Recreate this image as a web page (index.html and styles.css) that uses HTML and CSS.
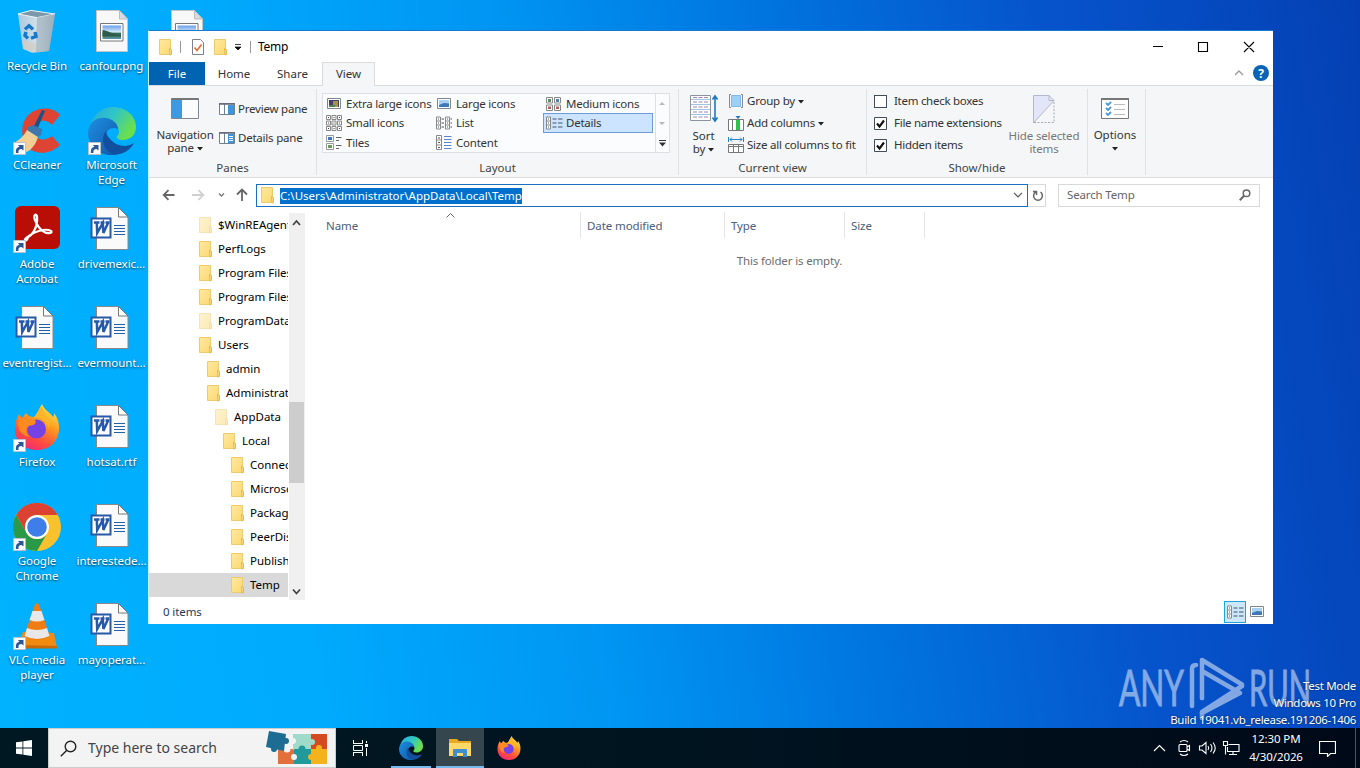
FILE: index.html
```html
<!DOCTYPE html>
<html lang="en">
<head>
<meta charset="utf-8">
<title>Desktop</title>
<link rel="stylesheet" href="styles.css">
</head>
<body>
<svg class="defs" width="0" height="0">
  <defs>
    <linearGradient id="gFold" x1="0" y1="0" x2="1" y2="1"><stop offset="0" stop-color="#ffe9a0"/><stop offset="1" stop-color="#fcd970"/></linearGradient>
    <linearGradient id="gEdge" x1="0" y1="0" x2="1" y2=".5"><stop offset="0" stop-color="#27a9dd"/><stop offset=".5" stop-color="#2fc5c8"/><stop offset="1" stop-color="#6be04a"/></linearGradient>
    <linearGradient id="gEdge2" x1="0" y1="0" x2="1" y2="1"><stop offset="0" stop-color="#1f8fe0"/><stop offset="1" stop-color="#0f55a8"/></linearGradient>
    <linearGradient id="gFox" x1=".8" y1="0" x2=".3" y2="1"><stop offset="0" stop-color="#fff04a"/><stop offset=".4" stop-color="#ff9a20"/><stop offset=".75" stop-color="#ff4a40"/><stop offset="1" stop-color="#f02a78"/></linearGradient>
    <linearGradient id="gSky" x1="0" y1="0" x2="0" y2="1"><stop offset="0" stop-color="#6aa0e8"/><stop offset=".5" stop-color="#d8ecfa"/><stop offset=".55" stop-color="#386a58"/><stop offset="1" stop-color="#5a94a8"/></linearGradient>
    <linearGradient id="gBin" x1="0" y1="0" x2="1" y2="0"><stop offset="0" stop-color="#a9c9de"/><stop offset=".6" stop-color="#d9e4ea"/><stop offset="1" stop-color="#8fa4b2"/></linearGradient>
    <symbol id="folder" viewBox="0 0 16 18"><path d="M1.500 1.500h11v15h-11z" fill="url(#gFold)" stroke="#eccb70"/><path d="M11.500 10.500l2 1v5l-1.500.500z" fill="#ffe08a" stroke="#d8b040" stroke-width=".8"/></symbol>
    <symbol id="shortcut" viewBox="0 0 13 13"><path d="M.5.5h12v12H.5z" fill="#fafcff" stroke="#b8c4cc"/><path d="M3 11C2.500 7 4 5 6.500 5L5 3h5.500v5.500L8.500 7C6 7 5 8.500 5.500 11z" fill="#2b5797"/></symbol>
    <symbol id="word" viewBox="0 0 40 46"><path d="M6.500 1.500h22l9.500 10v32H6.500z" fill="#fafafa" stroke="#888"/><path d="M28.500 1.500V11h9.500z" fill="#fff" stroke="#777"/><path d="M24 19.500h11M24 22.500h11M24 25.500h11M24 28.500h11" stroke="#2460a8"/><path d="M1.500 12.500h19v19h-19z" fill="#fff" stroke="#2659a8" stroke-width="2"/><path d="M4 16.500h5.500M10.500 16.500h4M15.500 16.500h4M6.800 17l.4 10 5.600-10 .6 10L18 17" fill="none" stroke="#2659a8" stroke-width="2.500"/></symbol>
    <symbol id="photo" viewBox="0 0 34 44"><path d="M1.500 1.500h23l8 8.500v32.500h-31z" fill="#f8f8f8" stroke="#c4c4c4"/><path d="M24.500 1.500V10h8z" fill="#d8dce0" stroke="#bbb"/><path d="M5.500 14.500h22.500v17.500H5.500z" fill="#fff" stroke="#777"/><path d="M7.500 16.500h18.500v13.500H7.500z" fill="url(#gSky)"/><path d="M7.500 21c5 0 7 4 18.500 4.500v2H7.500z" fill="#2e5b4b"/></symbol>
    <symbol id="edge" viewBox="0 0 48 48"><path d="M2 20C5 7 14 0 25 0c13 0 23 9 23 20 0 8-6 13-13 13-5 0-7-2-6-4 3-2 2-6 1-8C26 13 12 10 2 20z" fill="url(#gEdge)"/><path d="M0 26C1 13 11 10 18 11c7 1 12 6 12 11-6-3-13 1-12 9 1 8 6 13 13 16C15 52 0 41 0 26z" fill="url(#gEdge2)"/><path d="M18 24c-8 10 1 28 17 22 5-2 9-6 11-10-8 5-17 3-22-2-4-4-6-7-6-10z" fill="#124f9c"/></symbol>
    <symbol id="firefox" viewBox="0 0 46 46"><path d="M23 46C9 46 0 36 1 23c0-6 3-10 4-13l3 4 4-5c2 3 5 4 8 4 3-3 5-8 8-13 2 6 8 8 11 13 1-1 1-2 1-4 4 5 5 10 5 15 0 13-9 22-22 22z" fill="url(#gFox)"/><circle cx="22.500" cy="25" r="9.500" fill="#7542e5"/><path d="M5 14c7-1 12 3 16 2 2 4-1 5-6 6-4 2-3 8 1 11-9-1-14-9-11-19z" fill="#ff8b20"/><path d="M20 14c6-1 13 2 14 10 3-4 2-9-1-12-2-3-4-5-5-10-3 3-5 8-8 12z" fill="#ffb52a"/></symbol>
    <symbol id="picS" viewBox="0 0 16 14"><path d="M1.500 1.500h13v10h-13z" fill="#fff" stroke="#7d8590"/><path d="M3 3h10v7H3z" fill="#3d78b8"/><path d="M3 3h10v3.500L8 6 3 8z" fill="#a8d0f0"/></symbol>
    <symbol id="picX" viewBox="0 0 16 14"><path d="M1.500 1.500h13v10h-13z" fill="#fff" stroke="#7d8590"/><path d="M3 3h10v7H3z" fill="#3f3f6a"/><path d="M7 4h5v6H7z" fill="#a89440"/><path d="M3 8h6v2H3z" fill="#4f8058"/></symbol>
    <symbol id="grid9" viewBox="0 0 16 16"><path d="M.5.5h4v4h-4zM6 .5h4v4H6zM11.500.5h4v4h-4zM.5 6h4v4h-4zM6 6h4v4H6zM11.500 6h4v4h-4zM.5 11.500h4v4h-4zM6 11.500h4v4H6zM11.500 11.500h4v4h-4z" fill="#fff" stroke="#858585"/><path d="M2 2.500h1M7.500 2.500h1M13 2.500h1M2 8h1M7.500 8h1M13 8h1M2 13.500h1M7.500 13.500h1M13 13.500h1" stroke="#444"/></symbol>
    <symbol id="list" viewBox="0 0 16 14"><path d="M.5 1h4v12h-4zM9.500 1h4v12h-4zM.5 5h4M.5 9h4M9.500 5h4M9.500 9h4" fill="#fff" stroke="#888"/><path d="M2 3h1M2 7h1M2 11h1M11 3h1M11 7h1M11 11h1M5.500 3H8M5.500 7H8M5.500 11H8M14.500 3H16M14.500 7H16M14.500 11H16" stroke="#456"/></symbol>
    <symbol id="details" viewBox="0 0 17 14"><path d="M.5 1h4v12h-4zM.5 5h4M.5 9h4" fill="#fff" stroke="#888"/><path d="M2 3h1M2 7h1M2 11h1M6.500 3h4M6.500 7h4M6.500 11h4M12 3h4.500M12 7h4.500M12 11h4.500" stroke="#456"/></symbol>
    <symbol id="content" viewBox="0 0 16 15"><path d="M.5.5h5v14h-5zM.5 5h5M.5 10h5" fill="#fff" stroke="#888"/><path d="M2 3h2M2 7.500h2M2 12.500h2" stroke="#555"/><path d="M8 1.500h7.500M8 4.500h7.500M8 7.500h7.500M8 10.500h7.500M8 13.500h7.500" stroke="#5b85c8"/></symbol>
    <symbol id="tiles" viewBox="0 0 16 15"><path d="M.5.5h7v6h-7zM.5 8.500h7v6h-7z" fill="#fff" stroke="#999"/><path d="M2 2h4v3H2z" fill="#3d78b8"/><path d="M2 10h4v3H2z" fill="#6d9a58"/><path d="M10 2.500h5.500M10 5.500h3M10 10.500h5.500M10 13.500h3" stroke="#666"/></symbol>
    <symbol id="medium" viewBox="0 0 16 14"><path d="M.5.500h6v5.500h-6zM8.500.500h6v5.500h-6zM.5 8h6v5.500h-6zM8.500 8h6v5.500h-6z" fill="#fff" stroke="#888"/><path d="M2 2h3v3H2z" fill="#5b8a60"/><path d="M10 2h3v3h-3z" fill="#4d80b0"/><path d="M2 9.500h3v2.500H2zM10 9.500h3v2.500h-3z" fill="#b06060"/></symbol>
    <symbol id="check" viewBox="0 0 13 13"><path d="M.5.5h12v12H.5z" fill="#fff" stroke="#444c58"/><path d="M3 6.500l2.500 3L10 3.500" fill="none" stroke="#111" stroke-width="2.100"/></symbol>
    <symbol id="tri" viewBox="0 0 6 4"><path d="M0 0h6L3 3.500z" fill="#222"/></symbol>
  </defs>
</svg>

<main class="desktop">
  <div class="icons">
    <div class="ico"><svg width="48" height="48" viewBox="0 0 48 48"><g transform="translate(-1 1.500) scale(1 .9)"><path d="M6 5l13-4 24 4-6 41-17 2-9-4z" fill="url(#gBin)"/><path d="M6 5l13-4 24 4-18 4z" fill="#7d98a8" stroke="#eef6fa"/><path d="M25 9l18-4-6 41-13 2z" fill="#9fb2be" opacity=".7"/><path d="M10 34l14 4v9l-12-3z" fill="#dcc9b8" opacity=".6"/><path d="M13 22l4-4 4 4M23 25l1 5-5 2M16 32l-3-3 1-4" fill="none" stroke="#1478cc" stroke-width="3.500"/></g></svg><span>Recycle Bin</span></div>
    <div class="ico"><svg class="pic" width="34" height="44"><use href="#photo"/></svg><span>canfour.png</span></div>
    <div class="ico"><svg class="pic" width="34" height="44"><use href="#photo"/></svg></div>
    <div class="ico"><svg width="48" height="48" viewBox="0 0 48 48"><path d="M47 8C39-2 20 0 13 11c-7 10-4 28 7 33 10 4 20 1 27-6l-8-9c-6 5-14 5-17-2-2-6 1-12 6-13 5-1 8 1 11 4z" fill="#dd4434"/><path d="M29 3l3 1-8 19-4-2z" fill="#1f5080"/><path d="M15 20l5-2 9 4-1 6-4 3-10-5z" fill="#3c78ae"/><path d="M14 23l11 7c-2 7-6 12-11 15L1 36c5-3 10-7 13-13z" fill="#f2cf94"/><use href="#shortcut" x="0" y="35" width="13" height="13"/></svg><span>CCleaner</span></div>
    <div class="ico"><svg width="48" height="48" viewBox="0 0 48 48"><use href="#edge"/><use href="#shortcut" x="0" y="35" width="13" height="13"/></svg><span>Microsoft<br>Edge</span></div>
    <div class="ico"></div>
    <div class="ico"><svg width="48" height="48" viewBox="0 0 48 48"><rect x="2" y="0" width="45" height="43" rx="6" fill="#b90e05"/><path d="M13 32c8-3 12-13 11-22-1-3-4-1-2 4 4 10 10 14 15 13 4-1 0-4-7-3-7 1-12 4-17 8-3 4 0 4 2 0" fill="none" stroke="#fff" stroke-width="2.200"/><use href="#shortcut" x="0" y="34" width="13" height="13"/></svg><span>Adobe<br>Acrobat</span></div>
    <div class="ico"><svg class="doc" width="40" height="46"><use href="#word"/></svg><span>drivemexic...</span></div>
    <div class="ico"></div>
    <div class="ico"><svg class="doc" width="40" height="46"><use href="#word"/></svg><span>eventregist...</span></div>
    <div class="ico"><svg class="doc" width="40" height="46"><use href="#word"/></svg><span>evermount...</span></div>
    <div class="ico"></div>
    <div class="ico"><svg width="48" height="48" viewBox="0 0 48 48"><use href="#firefox" x="1" y="0" width="46" height="46"/><use href="#shortcut" x="0" y="35" width="13" height="13"/></svg><span>Firefox</span></div>
    <div class="ico"><svg class="doc" width="40" height="46"><use href="#word"/></svg><span>hotsat.rtf</span></div>
    <div class="ico"></div>
    <div class="ico"><svg width="48" height="48" viewBox="0 0 48 48"><circle cx="24" cy="24" r="24" fill="#f9c22d"/><path d="M3.200 12A24 24 0 0 1 44.800 12H24a12 12 0 0 0-10.400 18z" fill="#dd4132"/><path d="M3.200 12A24 24 0 0 0 24 48l10.400-18a12 12 0 0 1-20.800 0z" fill="#2a9a49"/><circle cx="24" cy="24" r="12" fill="#fff"/><circle cx="24" cy="24" r="9.800" fill="#3f7ee8"/><use href="#shortcut" x="0" y="35" width="13" height="13"/></svg><span>Google<br>Chrome</span></div>
    <div class="ico"><svg class="doc" width="40" height="46"><use href="#word"/></svg><span>interestede...</span></div>
    <div class="ico"></div>
    <div class="ico"><svg width="48" height="48" viewBox="0 0 48 48"><path d="M10 30l-5 12 8 4h31l-3-15z" fill="#f08a10"/><path d="M6 43l38 1v2.500H12z" fill="#c86a08"/><path d="M22 2.500q2-2.500 4 0l11 32q-13 7-26 0z" fill="#f07c12"/><path d="M19.500 9h9l3 9q-7.500 3-15 0zM14 26q10 4 20 0l2.500 8q-12.500 6-25 0z" fill="#e8e8e8"/><use href="#shortcut" x="0" y="35" width="13" height="13"/></svg><span>VLC media<br>player</span></div>
    <div class="ico"><svg class="doc" width="40" height="46"><use href="#word"/></svg><span>mayoperat...</span></div>
  </div>

  <div class="mark">
    <svg width="194" height="64" viewBox="0 0 194 64"><g fill="#fff" stroke="#fff" stroke-width=".9"><text x="1" y="50" font-size="51" textLength="65" lengthAdjust="spacingAndGlyphs">ANY</text><text x="131" y="50" font-size="51" textLength="62" lengthAdjust="spacingAndGlyphs">RUN</text></g><g fill="none" stroke="#fff" stroke-width="4.500" stroke-linejoin="round" stroke-linecap="round"><path d="M74 50V13q0-4 4-4"/><path d="M84 42V4l40 24.500M84 15l38 22-38 20"/><path d="M84 42v0M124 30L84 56v6"/></g></svg>
  </div>
  <div class="build">Test Mode<br>Windows 10 Pro<br>Build 19041.vb_release.191206-1406</div>

  <section class="window">
    <header class="titlebar">
      <svg class="tfold" width="16" height="18"><use href="#folder"/></svg><i class="tsep"></i>
      <svg class="tcheck" width="14" height="16" viewBox="0 0 14 16"><path d="M1.500.5h8l3 3v12h-11z" fill="#fff" stroke="#7a8290"/><path d="M3.500 8.500l2.500 3 4.500-6" fill="none" stroke="#e86a28" stroke-width="1.600"/></svg>
      <svg class="tfold2" width="16" height="18"><use href="#folder"/></svg>
      <svg class="tdown" width="8" height="7" viewBox="0 0 8 7"><path d="M1 .5h6M1 3h6L4 6z" fill="#111" stroke="#111" stroke-width=".8"/></svg><i class="tsep s2"></i>
      <span class="title">Temp</span>
      <svg class="wbtns" width="103" height="12" viewBox="0 0 103 12"><path d="M1 5.500h10M46.500 1.500h9v9h-9zM92 1l10 10M102 1L92 11" fill="none" stroke="#000" stroke-width="1.100"/></svg>
    </header>
    <nav class="tabs"><span class="file">File</span><span class="home">Home</span><span class="share">Share</span><span class="view">View</span>
      <svg class="help" width="34" height="18" viewBox="0 0 34 18"><path d="M0 11l4-4 4 4" fill="none" stroke="#9a9a9a" stroke-width="1.300"/><circle cx="26" cy="9" r="8" fill="#0b63b5"/><text x="26" y="13.500" text-anchor="middle" font-size="12" font-weight="700" fill="#fff">?</text></svg></nav>
    <div class="ribbon">
      <div class="group gp">
        <div class="body">
          <div class="big nav"><svg width="28" height="22" viewBox="0 0 28 22"><path d="M.5.5h27v20H.5z" fill="#fbfcfe" stroke="#7f8790"/><path d="M.5 1h27" stroke="#777" stroke-width="2"/><path d="M1 2h10v18H1z" fill="#3d9ae0"/></svg><span>Navigation<br>pane <svg width="6" height="4"><use href="#tri"/></svg></span></div>
          <div class="col panes">
            <div><svg width="16" height="12" viewBox="0 0 16 12"><path d="M.5.5h15v11H.5zM5.500 1v11" fill="#fff" stroke="#6f8090"/><path d="M9 2h6v9H9z" fill="#3d96dc"/><path d="M0 1h16" stroke="#667" stroke-width="1.500"/></svg><span>Preview pane</span></div>
            <div><svg width="16" height="12" viewBox="0 0 16 12"><path d="M.5.5h15v11H.5zM5.500 1v11" fill="#fff" stroke="#6f8090"/><path d="M9 2h6v9H9z" fill="#3d96dc"/><path d="M10 4.500h4M10 6.500h4M10 8.500h4" stroke="#fff"/><path d="M0 1h16" stroke="#667" stroke-width="1.500"/></svg><span>Details pane</span></div>
          </div>
        </div><footer>Panes</footer>
      </div>
      <div class="group gl">
        <div class="body"><div class="gallery">
          <div><svg width="16" height="14"><use href="#picX"/></svg><span>Extra large icons</span></div><div><svg width="16" height="14"><use href="#picS"/></svg><span>Large icons</span></div><div><svg width="16" height="14"><use href="#medium"/></svg><span>Medium icons</span></div>
          <div><svg width="16" height="16"><use href="#grid9"/></svg><span>Small icons</span></div><div><svg width="16" height="14"><use href="#list"/></svg><span>List</span></div><div class="sel"><svg width="17" height="14"><use href="#details"/></svg><span>Details</span></div>
          <div><svg width="16" height="15"><use href="#tiles"/></svg><span>Tiles</span></div><div><svg width="16" height="15"><use href="#content"/></svg><span>Content</span></div>
          <svg class="gscroll" width="14" height="58" viewBox="0 0 14 58"><path d="M.5 0v58" stroke="#dcdfe3"/><path d="M4 11h6l-3-3zM4 28h6l-3 3z" fill="#b8b8b8"/><path d="M4 46h7v1H4zM4 48.500h7l-3.500 4z" fill="#333"/></svg>
        </div></div><footer>Layout</footer>
      </div>
      <div class="group gc">
        <div class="body">
          <div class="big sort"><svg width="28" height="30" viewBox="0 0 28 30"><path d="M.5 1.500h20v25H.5z" fill="#fff" stroke="#8b949c"/><path d="M1 5.500h19M1 10.500h19M1 15.500h19M1 20.500h19" stroke="#9ec4e4"/><path d="M3 8h15M3 13h15M3 18h15M3 23h15M3 3.500h15" stroke="#98a" stroke-dasharray="4 1.500"/><path d="M25 3v23M22.500 5.500L25 2l2.500 3.500M22.500 23.500L25 27l2.500-3.500" fill="none" stroke="#1f7ac4" stroke-width="1.600"/></svg><span>Sort<br>by <svg width="6" height="4"><use href="#tri"/></svg></span></div>
          <div class="col cur">
            <div><svg width="16" height="14" viewBox="0 0 16 14"><path d="M3.500 1.500h9v11h-9z" fill="#9dd0f8" stroke="#80b8e8"/><path d="M3 .5H1.500v13H3M13 .5h1.500v13H13" fill="none" stroke="#889"/></svg><span>Group by <svg width="6" height="4"><use href="#tri"/></svg></span></div>
            <div><svg width="16" height="15" viewBox="0 0 16 15"><path d="M.5 3.500h15v11H.5zM4.500 3.500v11" fill="#fff" stroke="#777"/><path d="M8 4h4v10H8z" fill="#2cc44a"/><path d="M7.500 0h5L10 3z" fill="#2273c0"/></svg><span>Add columns <svg width="6" height="4"><use href="#tri"/></svg></span></div>
            <div><svg width="16" height="16" viewBox="0 0 16 16"><path d="M.5 7.500h15v8H.5zM5.500 8v8M10.500 8v8M.5 9.500h15" fill="#fff" stroke="#777"/><path d="M.5 0v5M15.500 0v5M2 2.500h12M4 .5l-2 2 2 2M12 .5l2 2-2 2" fill="none" stroke="#2a7fc8"/></svg><span>Size all columns to fit</span></div>
          </div>
        </div><footer>Current view</footer>
      </div>
      <div class="group gs">
        <div class="body">
          <div class="col chk">
            <div><i class="box"></i><span>Item check boxes</span></div>
            <div><svg width="13" height="13"><use href="#check"/></svg><span>File name extensions</span></div>
            <div><svg width="13" height="13"><use href="#check"/></svg><span>Hidden items</span></div>
          </div>
          <div class="big hide"><svg width="22" height="29" viewBox="0 0 22 29"><path d="M.5.5H16l5 5L.500 28z" fill="#e3e6f8" stroke="#b4b8cc"/><path d="M16 .5v5h5" fill="none" stroke="#b4b8cc"/><path d="M21 7v20.500H1" fill="none" stroke="#a4a8b4" stroke-dasharray="2 1.500"/></svg><span>Hide selected<br>items</span></div>
        </div><footer>Show/hide</footer>
      </div>
      <div class="group go"><div class="body"><div class="big opt"><svg width="28" height="21" viewBox="0 0 28 21"><path d="M.5.500h27v20H.5z" fill="#fff" stroke="#777"/><path d="M0 1h28" stroke="#777" stroke-width="2"/><path d="M5 5l2 2 3-3M5 10l2 2 3-3M5 15l2 2 3-3" fill="none" stroke="#4a98e0" stroke-width="1.800"/><path d="M13 6.500h11M13 11.500h11M13 16.500h11" stroke="#bbb"/></svg><span>Options<br><svg width="6" height="4"><use href="#tri"/></svg></span></div></div></div>
    </div>
    <div class="addr">
      <svg class="arrows" width="88" height="16" viewBox="0 0 88 16"><g fill="none" stroke-width="1.800"><path d="M13.500 8H3M7.500 3.200L2.700 8l4.800 4.800" stroke="#666"/><path d="M31 8h11M37.500 3.200L42.300 8l-4.800 4.800" stroke="#d0d0d0"/><path d="M58 6.500l2.500 2.500L63 6.500" stroke="#777" stroke-width="1.400"/><path d="M81 14V3M76 7.500l5-5 5 5" stroke="#666"/></g></svg>
      <div class="path"><svg width="16" height="18"><use href="#folder"/></svg><span>C:\Users\Administrator\AppData\Local\Temp</span><svg class="pdown" width="10" height="6" viewBox="0 0 10 6"><path d="M1 .8l4 4 4-4" fill="none" stroke="#555" stroke-width="1.200"/></svg></div>
      <div class="refresh"><svg width="12" height="12" viewBox="0 0 12 12"><path d="M8.500 2.200A4.400 4.400 0 1 1 3.500 2.200M1 1.500h3.500V5" fill="none" stroke="#666" stroke-width="1.500"/></svg></div>
      <div class="search"><span>Search Temp</span><svg width="12" height="12" viewBox="0 0 12 12"><circle cx="7.500" cy="4.300" r="3.300" fill="none" stroke="#666" stroke-width="1.500"/><path d="M5 6.800L.8 11.200" stroke="#666" stroke-width="2"/></svg></div>
    </div>
    <div class="content">
      <div class="tree">
        <div class="pale"><svg width="16" height="18"><use href="#folder"/></svg><span>$WinREAgent</span></div>
        <div><svg width="16" height="18"><use href="#folder"/></svg><span>PerfLogs</span></div>
        <div><svg width="16" height="18"><use href="#folder"/></svg><span>Program Files</span></div>
        <div><svg width="16" height="18"><use href="#folder"/></svg><span>Program Files</span></div>
        <div class="pale"><svg width="16" height="18"><use href="#folder"/></svg><span>ProgramData</span></div>
        <div><svg width="16" height="18"><use href="#folder"/></svg><span>Users</span></div>
        <div class="l1"><svg width="16" height="18"><use href="#folder"/></svg><span>admin</span></div>
        <div class="l1"><svg width="16" height="18"><use href="#folder"/></svg><span>Administrator</span></div>
        <div class="l2 pale"><svg width="16" height="18"><use href="#folder"/></svg><span>AppData</span></div>
        <div class="l3"><svg width="16" height="18"><use href="#folder"/></svg><span>Local</span></div>
        <div class="l4"><svg width="16" height="18"><use href="#folder"/></svg><span>Connected</span></div>
        <div class="l4"><svg width="16" height="18"><use href="#folder"/></svg><span>Microsoft</span></div>
        <div class="l4"><svg width="16" height="18"><use href="#folder"/></svg><span>Packages</span></div>
        <div class="l4"><svg width="16" height="18"><use href="#folder"/></svg><span>PeerDist</span></div>
        <div class="l4"><svg width="16" height="18"><use href="#folder"/></svg><span>Publishers</span></div>
        <div class="l4 cur-row"><svg width="16" height="18"><use href="#folder"/></svg><span>Temp</span></div>
      </div>
      <svg class="scroll" width="16" height="387" viewBox="0 0 16 387"><path d="M0 0h16v387H0z" fill="#f0f0f0"/><path d="M0 189h15v81H0z" fill="#cdcdcd"/><path d="M4 12l3.500-4 3.500 4M4 376.500l3.500 4 3.500-4" fill="none" stroke="#444" stroke-width="1.800"/></svg>
      <div class="files">
        <div class="heads"><span class="h1">Name<svg width="9" height="5" viewBox="0 0 9 5"><path d="M.5 4.500l4-4 4 4" fill="none" stroke="#666"/></svg></span><span class="h2">Date modified</span><span class="h3">Type</span><span class="h4">Size</span></div>
        <p>This folder is empty.</p>
      </div>
    </div>
    <footer class="status"><span>0 items</span><i><svg width="17" height="14"><use href="#details"/></svg></i><svg class="thumb" width="16" height="14"><use href="#picS"/></svg></footer>
  </section>
</main>

<div class="taskbar">
  <div class="start"><svg width="16" height="16" viewBox="0 0 16 16"><path d="M0 2.300l6.500-.9v6.200H0zM7.300 1.300L16 0v7.600H7.300zM0 8.400h6.500v6.200L0 13.700zM7.300 8.400H16V16l-8.700-1.300z" fill="#fff"/></svg></div>
  <div class="find"><svg width="17" height="17" viewBox="0 0 17 17"><circle cx="10.500" cy="6.500" r="5.300" fill="none" stroke="#222" stroke-width="1.400"/><path d="M6.800 10.300L.8 16.300" stroke="#222" stroke-width="1.400"/></svg><span>Type here to search</span>
    <svg class="puzzle" width="64" height="36" viewBox="0 0 64 36"><path d="M13 19h20v15H13z" fill="#e2703a"/><path d="M28 4h18v16H28z" fill="#9fdbc8"/><path d="M46 4h16v15H46z" fill="#d64a20"/><path d="M29 19h17v15H29z" fill="#219a9c"/><path d="M46 19h16v15H46z" fill="#f2b31c"/><g><circle cx="47" cy="12" r="3" fill="#9fdbc8"/><circle cx="54" cy="18" r="3" fill="#f2b31c"/><circle cx="37" cy="19" r="3.500" fill="#219a9c"/><circle cx="46" cy="27" r="3" fill="#f2b31c"/><circle cx="22" cy="19" r="3.500" fill="#f3f3f3"/><circle cx="29" cy="27" r="3" fill="#f3f3f3"/><circle cx="28" cy="11" r="3" fill="#f3f3f3"/></g><path d="M4 1l17 3-2 17-18-4z" fill="#1d6c93"/><circle cx="21" cy="11" r="3" fill="#1d6c93"/><circle cx="9" cy="19" r="3" fill="#1d6c93"/></svg></div>
  <div class="tb tv"><svg width="17" height="16" viewBox="0 0 17 16"><path d="M1 3.500h10M1 12.500h10M1.500 0v3.500M10.500 0v3.500M1.500 12.500V16M10.500 12.500V16M1.500 5.500h9v5h-9zM14.500 1v2M14.500 8v8" fill="none" stroke="#fff"/><path d="M13 4h3v3h-3z" fill="#fff"/></svg></div>
  <div class="tb run"><svg width="24" height="24"><use href="#edge"/></svg></div>
  <div class="tb run on"><svg width="22" height="20" viewBox="0 0 22 20"><path d="M0 1h8l2 2h12v15H0z" fill="#e8a820"/><path d="M0 5h22v13H0z" fill="#ffd868"/><path d="M4 19v-7q0-1 1-1h12q1 0 1 1v7h-4v-4H8v4z" fill="#3f8fd0"/></svg></div>
  <div class="tb"><svg width="24" height="24"><use href="#firefox"/></svg></div>
  <svg class="tray" width="88" height="18" viewBox="0 0 88 18"><g fill="none" stroke="#fff" stroke-width="1.100"><path d="M1 12l5.500-5.500L12 12"/><path d="M26 6.500q0-1 1-1h6q1 0 1 1v5q0 1-1 1h-6q-1 0-1-1zM34 8l2.500-1.500v5L34 10M27 3q4-3 8 0M27 15q4 3 8 0"/><path d="M46.500 7h2.500l4-3.500v11L49 11h-2.500zM55 7q1.500 2 0 4M57.500 5q3 4 0 8M60 3.500q4.500 5.500 0 11"/><path d="M75.500 5.500H86v7H74.500V8M80 12.500v3M76 15.500h8M70.500 2.500h4v4h-4zM72.500 6.500v9"/></g></svg>
  <div class="clock">12:30 PM<br>4/30/2026</div>
  <svg class="note" width="17" height="17" viewBox="0 0 17 17"><path d="M.5 1.500h16v12h-5l-3 3v-3h-8z" fill="none" stroke="#fff" stroke-width="1.200"/></svg>
  <i class="peek"></i>
</div>
</body>
</html>
```
FILE: styles.css
```css
* { box-sizing: border-box; }
body { margin: 0; width: 1360px; height: 768px; overflow: hidden; display: flex; flex-direction: column; font: 11.5px/16px "Noto Sans", "Open Sans", sans-serif; color: #222; }
svg { flex: none; display: block; }
span svg { display: inline-block; vertical-align: middle; }
.defs { position: absolute; }
.desktop { height: 728px; position: relative; overflow: hidden; background: linear-gradient(80deg, #00b2ff 0%, #00aafd 22%, #0095f2 42%, #0074df 60%, #0654cc 78%, #0440b4 100%); }
.icons { display: grid; grid-template-columns: 74px 75px 75px; grid-auto-rows: 99px; padding-top: 8px; width: 224px; }
.ico { display: flex; flex-direction: column; align-items: center; color: #fff; text-align: center; line-height: 15px; text-shadow: 0 1px 2px #034; white-space: nowrap; letter-spacing: -.05px; }
.ico svg { margin-bottom: 2px; }
.ico .pic { margin: 1px 0 5px; }
.ico .doc { margin: 0 4px 4px 0; }

.mark { position: absolute; left: 1118px; top: 656px; opacity: .5; font-family: Lato, sans-serif; font-weight: 400; }
.build { position: absolute; right: 4px; top: 677px; text-align: right; color: #fff; font-size: 11.5px; letter-spacing: -.3px; line-height: 17px; text-shadow: 0 0 2px #024; }

.window { position: absolute; left: 148px; top: 30px; width: 1125px; height: 594px; background: #fff; border: 1px solid #1a78cc; border-left-color: #c8f0ff; border-right: 0; border-bottom: 0; display: flex; flex-direction: column; }
.titlebar { height: 31px; display: flex; align-items: center; padding: 0 18px 0 9px; }
.tsep { width: 1px; height: 12px; background: #999; margin-left: 6px; }
.tcheck { margin-left: 10px; }
.tfold2 { margin-left: 8px; }
.tdown { margin: 2px 0 0 5px; }
.s2 { margin-left: 8px; }
.title { margin-left: 7px; color: #000; font-size: 12px; letter-spacing: -.3px; }
.wbtns { margin-left: auto; }
.tabs { height: 24px; display: flex; border-bottom: 1px solid #dadbdc; line-height: 24px; text-align: center; color: #333; flex: none; }
.tabs > span { width: 58px; }
.tabs .file { width: 56px; background: #0063b1; color: #fff; }
.tabs .share { width: 59px; }
.tabs .view { width: 53px; height: 24px; background: #f5f6f7; border: 1px solid #dadbdc; border-bottom: 0; line-height: 22px; }
.help { margin: 2px 4px 0 auto; }
.ribbon { height: 92px; flex: none; background: #f5f6f7; border-bottom: 1px solid #dadbdc; display: flex; color: #333; letter-spacing: -.22px; }
.group { border-right: 1px solid #dfe1e3; margin: 3px 0 2px; display: flex; flex-direction: column; }
.group .body { flex: 1; display: flex; }
.group footer { text-align: center; height: 17px; line-height: 19px; color: #444; letter-spacing: 0; }
.gp { width: 168px; } .gl { width: 362px; } .gc { width: 188px; } .gs { width: 221px; } .go { width: 58px; }
.big { display: flex; flex-direction: column; align-items: center; text-align: center; line-height: 13px; white-space: nowrap; letter-spacing: 0; }
.big.nav { width: 72px; padding-top: 9px; gap: 8px; letter-spacing: -.15px; }
.big.sort { width: 49px; padding-top: 5px; gap: 5px; }
.big.hide { width: 86px; padding-top: 6px; gap: 5px; color: #777; letter-spacing: -.15px; }
.big.opt { width: 54px; padding-top: 9px; gap: 9px; }
.col { display: flex; flex-direction: column; white-space: nowrap; }
.col > div { display: flex; align-items: center; height: 22px; }
.panes { padding-top: 5px; }
.panes > div { height: 29px; gap: 3px; padding-top: 1px; margin-left: -2px; }
.cur { padding-top: 1px; } .cur > div { gap: 3px; }
.chk { width: 134px; padding: 1px 0 0 7px; letter-spacing: -.28px; } .chk > div { gap: 7px; }
.box { width: 13px; height: 13px; border: 1px solid #444c58; background: #fff; }
.gallery { margin: 4px 0 0 5px; width: 348px; height: 60px; border: 1px solid #dcdfe3; background: #fbfcfd; display: grid; grid-template: 19px 20px 19px / 110px 110px 110px 2px 14px; align-items: center; }
.gallery > div { height: 20px; display: flex; align-items: center; gap: 4px; padding-left: 3px; white-space: nowrap; }
.gallery > div:nth-child(3n+1) { grid-column: 1; }
.gallery .sel { background: #cce4ff; border: 1px solid #6d9ad8; padding-left: 2px; gap: 3px; }
.gscroll { grid-area: 1 / 5 / 4 / 6; }
.addr { height: 34px; flex: none; display: flex; align-items: center; padding-left: 12px; }
.arrows { margin-right: 7px; }
.path { width: 772px; height: 23px; border: 1px solid #1a6fb8; display: flex; align-items: center; padding: 0 4px 0 3px; }
.path span { background: #0070cc; color: #fff; margin-left: 4px; line-height: 16px; margin-top: 1px; }
.pdown { margin-left: auto; }
.refresh { width: 18px; height: 23px; border: 1px solid #d9d9d9; border-left: 0; display: grid; place-items: center; padding: 1px 0 0 2px; }
.search { width: 202px; height: 23px; margin-left: 12px; border: 1px solid #d9d9d9; display: flex; align-items: center; justify-content: space-between; padding: 0 8px; color: #666; letter-spacing: -.15px; }
.content { display: flex; height: 388px; padding-top: 1px; flex: none; }
.tree { width: 139px; overflow: hidden; color: #000; }
.tree > div { height: 24px; display: flex; align-items: center; gap: 4px; padding-left: 49px; white-space: nowrap; }
.tree > .l1 { padding-left: 57px; } .tree > .l2 { padding-left: 65px; } .tree > .l3 { padding-left: 73px; } .tree > .l4 { padding-left: 81px; }
.tree > .cur-row { background: #d9d9d9; }
.pale svg { opacity: .5; }
.scroll { margin-left: 1px; }
.files { flex: 1; }
.heads { display: flex; height: 26px; line-height: 28px; color: #4c607a; margin-top: -1px; letter-spacing: -.1px; }
.heads span { border-right: 1px solid #e5e5e5; padding-left: 6px; }
.heads .h1 { width: 276px; padding-left: 21px; display: flex; }
.h1 svg { margin: 1px 0 0 88px; }
.heads .h2 { width: 144px; } .heads .h3 { width: 120px; } .heads .h4 { width: 80px; }
.files p { margin: 15px 0 0 1px; text-align: center; color: #6d6d6d; letter-spacing: -.15px; }
.status { flex: 1; display: flex; align-items: center; padding: 0 8px 0 14px; color: #1e395b; letter-spacing: -.1px; }
.status i { margin-left: auto; width: 22px; height: 22px; border: 1px solid #26a0da; background: #cce8f8; display: grid; place-items: center; }
.thumb { margin-left: 3px; }

.taskbar { height: 40px; display: flex; align-items: center; background: linear-gradient(90deg, #001822, #001420 50%, #000918); color: #fff; }
.start { width: 48px; display: grid; place-items: center; }
.find { width: 288px; height: 40px; background: #f3f3f3; border: 1px solid #ccc; display: flex; align-items: center; color: #444; font-size: 14px; padding: 0 6px 0 11px; }
.find span { margin-left: 11px; }
.puzzle { margin-left: auto; }
.tb { width: 48px; height: 40px; display: grid; place-items: center; margin-right: 1px; }
.tv { width: 48px; margin-right: 3px; }
.run { background: linear-gradient(#76b9ed, #76b9ed) center bottom / 40px 2px no-repeat; }
.on { background: linear-gradient(#76b9ed, #76b9ed) bottom / 48px 2px no-repeat #36464f; }
.tray { margin-left: auto; }
.clock { width: 72px; text-align: center; letter-spacing: -.1px; line-height: 18px; margin-left: -1px; }
.note { margin-left: 7px; }
.peek { width: 1px; height: 40px; background: #4a5560; margin: 0 4px 0 19px; }
```
